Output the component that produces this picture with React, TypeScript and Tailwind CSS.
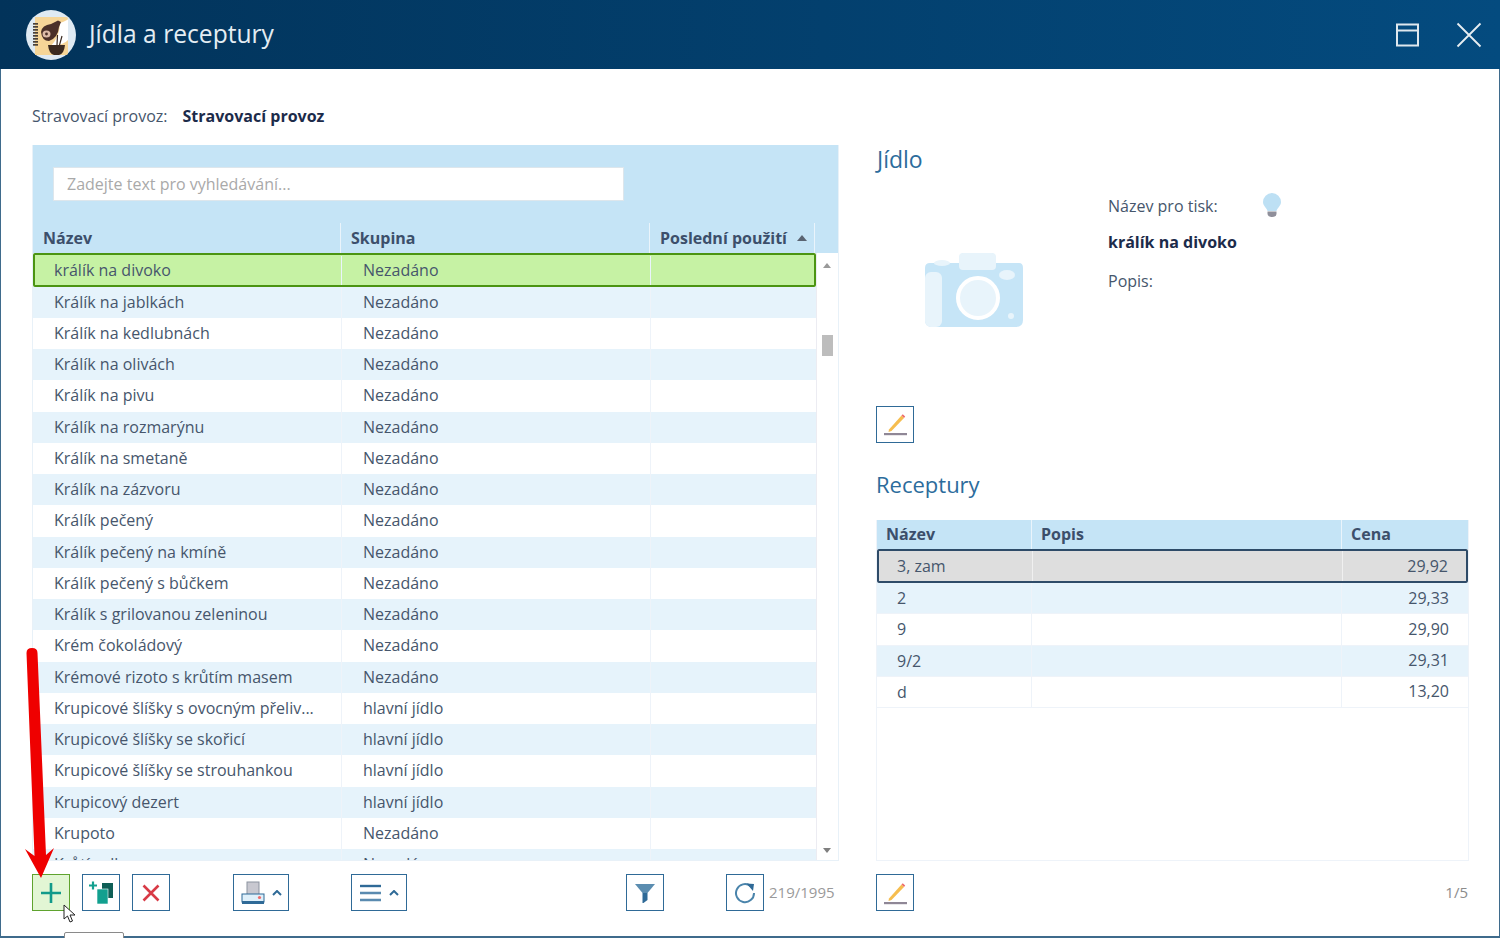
const foods: [string, string][] = [
  ['Králík na jablkách', 'Nezadáno'],
  ['Králík na kedlubnách', 'Nezadáno'],
  ['Králík na olivách', 'Nezadáno'],
  ['Králík na pivu', 'Nezadáno'],
  ['Králík na rozmarýnu', 'Nezadáno'],
  ['Králík na smetaně', 'Nezadáno'],
  ['Králík na zázvoru', 'Nezadáno'],
  ['Králík pečený', 'Nezadáno'],
  ['Králík pečený na kmíně', 'Nezadáno'],
  ['Králík pečený s bůčkem', 'Nezadáno'],
  ['Králík s grilovanou zeleninou', 'Nezadáno'],
  ['Krém čokoládový', 'Nezadáno'],
  ['Krémové rizoto s krůtím masem', 'Nezadáno'],
  ['Krupicové šlíšky s ovocným přeliv...', 'hlavní jídlo'],
  ['Krupicové šlíšky se skořicí', 'hlavní jídlo'],
  ['Krupicové šlíšky se strouhankou', 'hlavní jídlo'],
  ['Krupicový dezert', 'hlavní jídlo'],
  ['Krupoto', 'Nezadáno'],
  ['Krůtí rolka', 'Nezadáno'],
];

const recipes = [
  ['2', '29,33'],
  ['9', '29,90'],
  ['9/2', '29,31'],
  ['d', '13,20'],
];

function ToolButton({ children, wide, active }: { children: React.ReactNode; wide?: boolean; active?: boolean }) {
  return (
    <button
      className={`flex h-[37px] items-center justify-center border ${wide ? 'w-[56px]' : 'w-[38px]'} ${
        active ? 'border-[#5fa32e] bg-[#e2f6d4]' : 'border-[#2f6a97] bg-white'
      }`}
    >
      {children}
    </button>
  );
}

function Caret() {
  return (
    <svg width="10" height="6" viewBox="0 0 10 6" className="ml-[7px]">
      <path d="M1 5 L5 1 L9 5" fill="none" stroke="#2f6a97" strokeWidth="2" />
    </svg>
  );
}

function PencilIcon() {
  return (
    <svg width="24" height="24" viewBox="0 0 24 24">
      <path d="M6 17.5 L18.5 3.5 L21 6 L8.5 19 L5.5 20 Z" fill="#f6bd4f" />
      <path d="M18.5 3.5 L19.8 2.2 L22.2 4.6 L21 6 Z" fill="#ee6c6c" />
      <rect x="1" y="21" width="23" height="2.2" fill="#8f8796" />
    </svg>
  );
}

function AppLogo() {
  return (
    <svg width="50" height="50" viewBox="0 0 50 50" className="shrink-0">
      <circle cx="25" cy="25" r="25" fill="#dfeaf3" />
      <path d="M9 7 H40 Q42 7 42 9 V43 Q42 45 40 45 H9 Z" fill="#f6d597" />
      <path d="M34 13 Q42 10 42 9 V30 Q38 35 25 36 Q34 26 34 13 Z" fill="#ffffff" />
      {[13, 16, 19, 22, 25, 28, 31, 34].map((y) => (
        <rect key={y} x="7" y={y} width="5" height="1.7" fill="#4a4038" />
      ))}
      <path d="M15 22 Q16 15 25 14 L32 10.5 L35 12 L33 17 Q32 28 23 31 Q16 31 15 22 Z" fill="#4b3028" />
      <ellipse cx="20.5" cy="24" rx="4" ry="3.6" fill="#dcbba8" />
      <circle cx="20.5" cy="24" r="1.4" fill="#4b3028" />
      <path d="M22 35 H39 Q38 44 33 45 H28 Q23 44 22 35 Z" fill="#3b2a20" />
      <path d="M31 35 L31.5 25 M33.5 35 L36 26" stroke="#3b2a20" strokeWidth="1.2" fill="none" />
    </svg>
  );
}

export default function App() {
  return (
    <div className="relative flex h-[938px] w-[1500px] flex-col overflow-hidden bg-white font-['Open_Sans','Noto_Sans',sans-serif] text-[16px] text-[#46566c]">
      <header className="flex h-[69px] shrink-0 items-center bg-gradient-to-r from-[#02335a] to-[#044b7f] pl-[26px] pr-[18px]">
        <AppLogo />
        <h1 className="ml-[13px] text-[24.6px] text-[#e4edf3]">Jídla a receptury</h1>
        <div className="ml-auto flex items-center gap-[36px]">
          <svg width="24" height="24" viewBox="0 0 24 24">
            <rect x="1" y="1.5" width="21" height="21" fill="none" stroke="#dfe8ee" strokeWidth="2" />
            <path d="M1 7.5 H22" stroke="#dfe8ee" strokeWidth="2" />
          </svg>
          <svg width="26" height="26" viewBox="0 0 26 26">
            <path d="M1.5 1.5 L24.5 24.5 M24.5 1.5 L1.5 24.5" stroke="#e8eef2" strokeWidth="1.8" />
          </svg>
        </div>
      </header>

      <main className="flex min-h-0 flex-1 flex-col border-x border-b-2 border-[#3f6b8c] pl-[31px] pr-[29px]">
        <div className="mt-[35px] flex h-[24px] items-center">
          <span>Stravovací provoz:</span>
          <strong className="ml-[15px] font-bold text-[#1c2b4a]">Stravovací provoz</strong>
        </div>

        <div className="mt-[17px] flex gap-[37px]">
          <section className="h-[716px] w-[807px] shrink-0 overflow-hidden border border-t-0 border-[#e8f1f8]">
            <div className="flex h-[78px] items-center bg-[#c5e4f6] pl-[20px]">
              <input
                placeholder="Zadejte text pro vyhledávání..."
                className="h-[34px] w-[571px] border border-[#dde6ec] bg-white px-[13px] text-[16px] placeholder:text-[#a9a9a9]"
                readOnly
              />
            </div>
            <div className="flex h-[30px] bg-[#c5e4f6] font-bold text-[#3c4f6b]">
              <div className="w-[308px] border-r border-[#eaf4fb] pl-[10px] leading-[30px]">Název</div>
              <div className="w-[309px] border-r border-[#eaf4fb] pl-[10px] leading-[30px]">Skupina</div>
              <div className="flex w-[165px] items-center border-r border-[#eaf4fb] pl-[10px]">
                Poslední použití
                <svg width="10" height="6" viewBox="0 0 10 6" className="ml-[10px]">
                  <path d="M0 6 L5 0 L10 6 Z" fill="#5a6472" />
                </svg>
              </div>
            </div>
            <div className="flex h-[608px]">
              <div className="w-[783px] shrink-0 overflow-hidden">
                <div className="flex h-[33.5px] w-[783px] items-center rounded-[2px] border-2 border-[#4b9412] bg-[#c6f2a4] pt-[2px]">
                  <div className="w-[307px] border-r border-[#eaf4fb] pl-[19px] leading-[29px]">králík na divoko</div>
                  <div className="w-[309px] border-r border-[#eaf4fb] pl-[21px] leading-[29px]">Nezadáno</div>
                </div>
                {foods.map(([name, group], i) => (
                  <div
                    key={name}
                    className={`flex h-[31.25px] items-center leading-[31px] ${i % 2 === 0 ? 'bg-[#e6f3fb]' : 'bg-white'}`}
                  >
                    <div className="h-full w-[309px] border-r border-[#eef3f9] pl-[21px]">{name}</div>
                    <div className="h-full w-[309px] border-r border-[#eef3f9] pl-[21px]">{group}</div>
                  </div>
                ))}
              </div>
              <div className="relative w-[22px] border-l border-[#ececf2]">
                <svg width="8" height="5" viewBox="0 0 8 5" className="absolute left-[6px] top-[10px]">
                  <path d="M0 5 L4 0 L8 5 Z" fill="#9a9a9a" />
                </svg>
                <div className="absolute left-[5px] top-[82px] h-[21px] w-[11px] bg-[#bdbdbd]" />
                <svg width="8" height="5" viewBox="0 0 8 5" className="absolute bottom-[8px] left-[6px]">
                  <path d="M0 0 L4 5 L8 0 Z" fill="#7f7f7f" />
                </svg>
              </div>
            </div>
          </section>

          <section className="flex h-[716px] w-[593px] flex-col">
            <h2 className="mb-[2px] pl-px text-[23px] leading-[28px] text-[#2c6c9c]">Jídlo</h2>
            <div className="flex h-[220px] pt-[2px]">
              <div className="flex w-[232px] items-center pl-[48px] pt-[8px]">
                <svg width="100" height="76" viewBox="0 0 100 76">
                  <path d="M35 9 Q35 1 40 1 H67 Q72 1 72 9 V11 H95 Q99 11 99 16 V68 Q99 75 92 75 H8 Q1 75 1 68 V16 Q1 11 6 11 H35 Z" fill="#c6e5f7" />
                  <rect x="35" y="1" width="37" height="17" rx="4" fill="#e8f4fb" />
                  <rect x="1" y="20" width="17" height="55" rx="6" fill="#e8f4fb" />
                  <ellipse cx="18" cy="11" rx="8" ry="3" fill="#e8f4fb" />
                  <ellipse cx="83" cy="23" rx="8" ry="5" fill="#e8f4fb" />
                  <circle cx="54" cy="46" r="20" fill="#e8f4fb" stroke="#ffffff" strokeWidth="4" />
                  <circle cx="87" cy="64" r="3" fill="#e8f4fb" />
                </svg>
              </div>
              <div className="pt-[15px]">
                <div className="flex items-center">
                  <span className="w-[154px] leading-[28px]">Název pro tisk:</span>
                  <svg width="20" height="26" viewBox="0 0 20 26" className="mt-[-2px]">
                    <path d="M10 1 A9 9 0 0 1 19 10 C19 14 15 16 14.5 19 H5.5 C5 16 1 14 1 10 A9 9 0 0 1 10 1 Z" fill="#bde0f4" />
                    <path d="M5.5 19.5 H14.5 V22 Q14 25 10 25 Q6 25 5.5 22 Z" fill="#8f8f9a" />
                  </svg>
                </div>
                <strong className="mt-[8px] block font-bold leading-[28px] text-[#1c2b4a]">králík na divoko</strong>
                <p className="mt-[13px] leading-[24px]">Popis:</p>
              </div>
            </div>
            <div className="mt-[11px]">
              <ToolButton>
                <PencilIcon />
              </ToolButton>
            </div>
            <h2 className="mt-[26px] text-[22px] leading-[30px] text-[#2c6c9c]">Receptury</h2>
            <div className="mt-[21px] h-[342px] border border-t-0 border-[#eef3f9]">
              <div className="flex h-[29px] bg-[#c5e4f6] font-bold leading-[29px] text-[#3c4f6b]">
                <div className="w-[155px] border-r border-[#eaf4fb] pl-[9px]">Název</div>
                <div className="w-[310px] border-r border-[#eaf4fb] pl-[9px]">Popis</div>
                <div className="flex-1 pl-[9px]">Cena</div>
              </div>
              <div className="flex h-[34.5px] items-center rounded-[2px] border-2 border-[#2e4b68] bg-[#dedede] pt-[1px] leading-[30px]">
                <div className="w-[154px] border-r border-[#f0f0f0] pl-[18px]">3, zam</div>
                <div className="w-[310px] border-r border-[#f0f0f0] leading-[30px]">&nbsp;</div>
                <div className="flex-1 pr-[18px] text-right">29,92</div>
              </div>
              {recipes.map(([name, price], i) => (
                <div
                  key={name}
                  className={`flex h-[31.25px] items-center border-b border-[#eef3f9] leading-[31px] ${i % 2 === 0 ? 'bg-[#e6f3fb]' : 'bg-white'}`}
                >
                  <div className="h-full w-[155px] border-r border-[#eef3f9] pl-[20px]">{name}</div>
                  <div className="h-full w-[310px] border-r border-[#eef3f9]">&nbsp;</div>
                  <div className="flex-1 pr-[19px] text-right">{price}</div>
                </div>
              ))}
            </div>
          </section>
        </div>

        <div className="mt-[13px] flex">
          <div className="flex w-[807px] items-center">
            <ToolButton active>
              <svg width="22" height="22" viewBox="0 0 22 22">
                <path d="M11 1 V21 M1 11 H21" stroke="#119a8a" strokeWidth="2.6" />
              </svg>
            </ToolButton>
            <div className="ml-[12px]">
              <ToolButton>
                <svg width="26" height="24" viewBox="0 0 26 24">
                  <rect x="14" y="2" width="11" height="15" fill="#0f5f56" />
                  <rect x="9" y="8" width="11" height="15" fill="#12a08f" stroke="#ffffff" strokeWidth="0.6" />
                  <path d="M5 0.5 V8.5 M1 4.5 H9" stroke="#12a08f" strokeWidth="2.2" />
                </svg>
              </ToolButton>
            </div>
            <div className="ml-[12px]">
              <ToolButton>
                <svg width="18" height="18" viewBox="0 0 18 18">
                  <path d="M1.5 1.5 L16.5 16.5 M16.5 1.5 L1.5 16.5" stroke="#d83a46" strokeWidth="2.6" />
                </svg>
              </ToolButton>
            </div>
            <div className="ml-[63px]">
              <ToolButton wide>
                <svg width="24" height="24" viewBox="0 0 24 24">
                  <rect x="6" y="1" width="12" height="13" fill="#c8c8d0" stroke="#8c93a0" />
                  <rect x="1" y="13" width="22" height="8" fill="#dff0fa" stroke="#2f6a97" />
                  <rect x="1" y="20" width="22" height="3" fill="#2f6a97" />
                  <circle cx="18.5" cy="16.5" r="1.6" fill="#ef6b6b" />
                </svg>
                <Caret />
              </ToolButton>
            </div>
            <div className="ml-[62px]">
              <ToolButton wide>
                <svg width="22" height="18" viewBox="0 0 22 18">
                  <path d="M0 2 H21" stroke="#2f6a97" strokeWidth="2.4" />
                  <path d="M0 9 H21 M0 16 H21" stroke="#5a8bb0" strokeWidth="2.4" />
                </svg>
                <Caret />
              </ToolButton>
            </div>
            <div className="ml-[219px]">
              <ToolButton>
                <svg width="20" height="20" viewBox="0 0 20 20">
                  <path d="M0 1 H20 L12.5 10 H7.5 Z" fill="#5b8db0" />
                  <path d="M7.5 10 H12.5 V17 L8.5 20 H7.5 Z" fill="#2f6a97" />
                </svg>
              </ToolButton>
            </div>
            <div className="ml-[62px]">
              <ToolButton>
                <svg width="22" height="22" viewBox="0 0 22 22">
                  <path d="M16.5 4 A9 9 0 1 0 20 11" fill="none" stroke="#4a84ab" strokeWidth="2" />
                  <path d="M12.5 1.5 L20 2 L19 9 Z" fill="#2f6a97" />
                </svg>
              </ToolButton>
            </div>
            <span className="ml-[5px] text-[15px] text-[#9a9a9a]">219/1995</span>
          </div>
          <div className="ml-[37px] flex w-[593px] items-center justify-between pr-[1px]">
            <ToolButton>
              <PencilIcon />
            </ToolButton>
            <span className="text-[15px] text-[#8c8c8c]">1/5</span>
          </div>
        </div>
      </main>

      {/* red arrow pointing at the add button */}
      <svg width="34" height="234" viewBox="0 0 34 234" className="absolute left-[24px] top-[646px]">
        <path d="M2.5 7 Q2.5 2 8 2 Q13.5 2 13.5 7 L22 209 L30 202 L17 232 L1 203 L10.5 210 Z" fill="#ef0000" />
      </svg>
      {/* mouse cursor */}
      <svg width="14" height="20" viewBox="0 0 14 20" className="absolute left-[63px] top-[904px]">
        <path d="M1 1 L1 15 L4.5 12 L7 18 L9.5 17 L7 11 L12 11 Z" fill="#ffffff" stroke="#222222" strokeWidth="1" />
      </svg>
      {/* tooltip peeking in */}
      <div className="absolute left-[64px] top-[932px] h-[10px] w-[60px] rounded-t-[2px] border border-[#8a8a8a] bg-white" />
    </div>
  );
}
